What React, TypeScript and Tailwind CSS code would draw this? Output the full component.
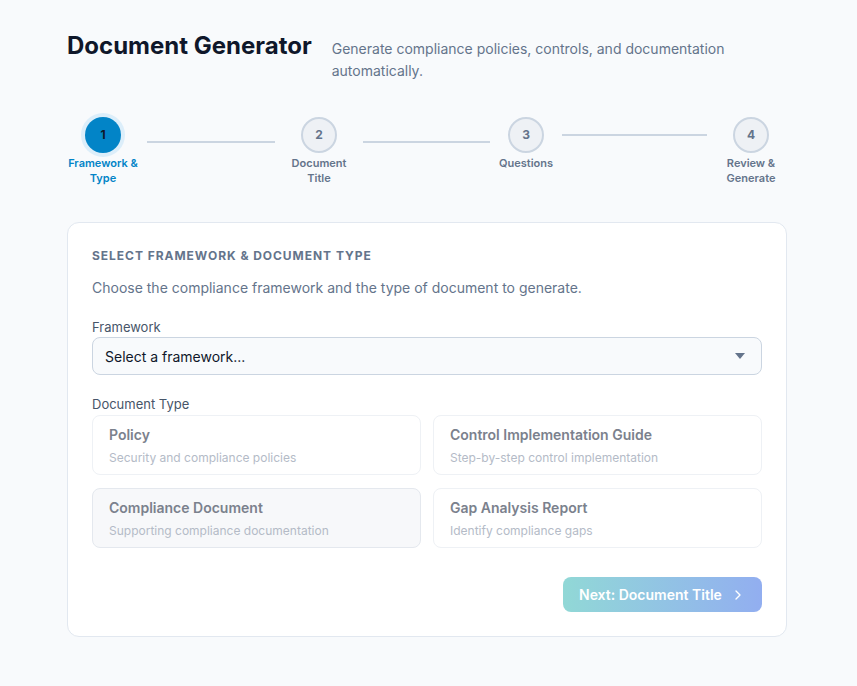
import { ChevronRight } from "lucide-react";

const steps = [
  { n: "1", label: ["Framework &", "Type"], active: true },
  { n: "2", label: ["Document", "Title"], active: false },
  { n: "3", label: ["Questions"], active: false },
  { n: "4", label: ["Review &", "Generate"], active: false },
];

const docTypes = [
  { title: "Policy", desc: "Security and compliance policies", selected: false },
  { title: "Control Implementation Guide", desc: "Step-by-step control implementation", selected: false },
  { title: "Compliance Document", desc: "Supporting compliance documentation", selected: true },
  { title: "Gap Analysis Report", desc: "Identify compliance gaps", selected: false },
];

const Step = ({ n, label, active }: { n: string; label: string[]; active: boolean }) => (
  <div className="w-[72px] shrink-0 flex flex-col items-center">
    {active ? (
      <div className="w-9 h-9 rounded-full bg-[#0284c7] ring-4 ring-[#dceefa] flex items-center justify-center text-[12px] font-bold text-[#0f172a]">
        {n}
      </div>
    ) : (
      <div className="w-9 h-9 rounded-full bg-[#eef1f5] border-2 border-[#cbd5e1] flex items-center justify-center text-[12px] font-bold text-[#64748b]">
        {n}
      </div>
    )}
    <div
      className={`mt-[3px] text-center text-[11px] leading-[15px] font-semibold ${
        active ? "text-[#0284c7]" : "text-[#64748b]"
      }`}
    >
      {label.map((l) => (
        <div key={l}>{l}</div>
      ))}
    </div>
  </div>
);

const App = () => {
  return (
    <main className="min-h-screen bg-[#f8fafc] font-['Inter',sans-serif]">
      <div className="w-[720px] ml-[67px] pt-[30px] pb-12">
        <div className="flex items-baseline gap-5">
          <h1 className="text-[24px] leading-8 font-bold text-[#0f172a] whitespace-nowrap">
            Document Generator
          </h1>
          <p className="text-[14px] leading-[22px] text-[#64748b]">
            Generate compliance policies, controls, and documentation automatically.
          </p>
        </div>

        <div className="mt-[35px] flex items-start">
          <Step {...steps[0]} />
          <div className="ml-2 mt-6 w-[128px] h-[2px] bg-[#cbd5e1]" />
          <div className="ml-2">
            <Step {...steps[1]} />
          </div>
          <div className="ml-2 mt-6 w-[127px] h-[2px] bg-[#cbd5e1]" />
          <Step {...steps[2]} />
          <div className="mt-[17px] w-[145px] h-[2px] bg-[#cbd5e1]" />
          <div className="ml-2">
            <Step {...steps[3]} />
          </div>
        </div>

        <div className="mt-[36px] bg-white border border-[#e2e8f0] rounded-xl px-6 pt-[25px] pb-6">
          <h2 className="text-[12px] leading-4 font-bold tracking-[0.08em] uppercase text-[#64748b]">
            Select Framework &amp; Document Type
          </h2>
          <p className="mt-[14px] text-[14px] leading-5 text-[#64748b]">
            Choose the compliance framework and the type of document to generate.
          </p>

          <div className="mt-5">
            <label className="block text-[13px] leading-[18px] text-[#475569]">Framework</label>
            <div className="mt-[1px] h-[38px] border border-[#cbd5e1] rounded-lg bg-[#f8fafc] flex items-center justify-between pl-3 pr-3">
              <span className="text-[14px] text-[#0f172a]">Select a framework...</span>
              <svg width="10" height="6" viewBox="0 0 10 6" className="mr-1">
                <path d="M0 0 L10 0 L5 6 Z" fill="#64748b" />
              </svg>
            </div>
          </div>

          <div className="mt-5">
            <label className="block text-[13px] leading-[18px] text-[#475569]">Document Type</label>
            <div className="mt-[2px] grid grid-cols-2 gap-x-3 gap-y-[13px]">
              {docTypes.map((d) => (
                <div
                  key={d.title}
                  className={`h-[60px] rounded-lg border px-4 pt-[9px] ${
                    d.selected ? "bg-[#f7f8fa] border-[#e4e8ee]" : "bg-white border-[#eef1f5]"
                  }`}
                >
                  <div className="text-[14px] leading-5 font-semibold text-[#7b818d]">{d.title}</div>
                  <div className="mt-[5px] text-[12px] leading-4 text-[#b4bbc7]">{d.desc}</div>
                </div>
              ))}
            </div>
          </div>

          <div className="mt-[29px] flex justify-end">
            <button className="h-[35px] w-[199px] rounded-lg bg-gradient-to-r from-[#91d8d6] to-[#92aef0] text-white text-[14px] font-semibold flex items-center pl-4 gap-2">
              Next: Document Title
              <ChevronRight size={16} strokeWidth={2} />
            </button>
          </div>
        </div>
      </div>
    </main>
  );
};

export default App;
